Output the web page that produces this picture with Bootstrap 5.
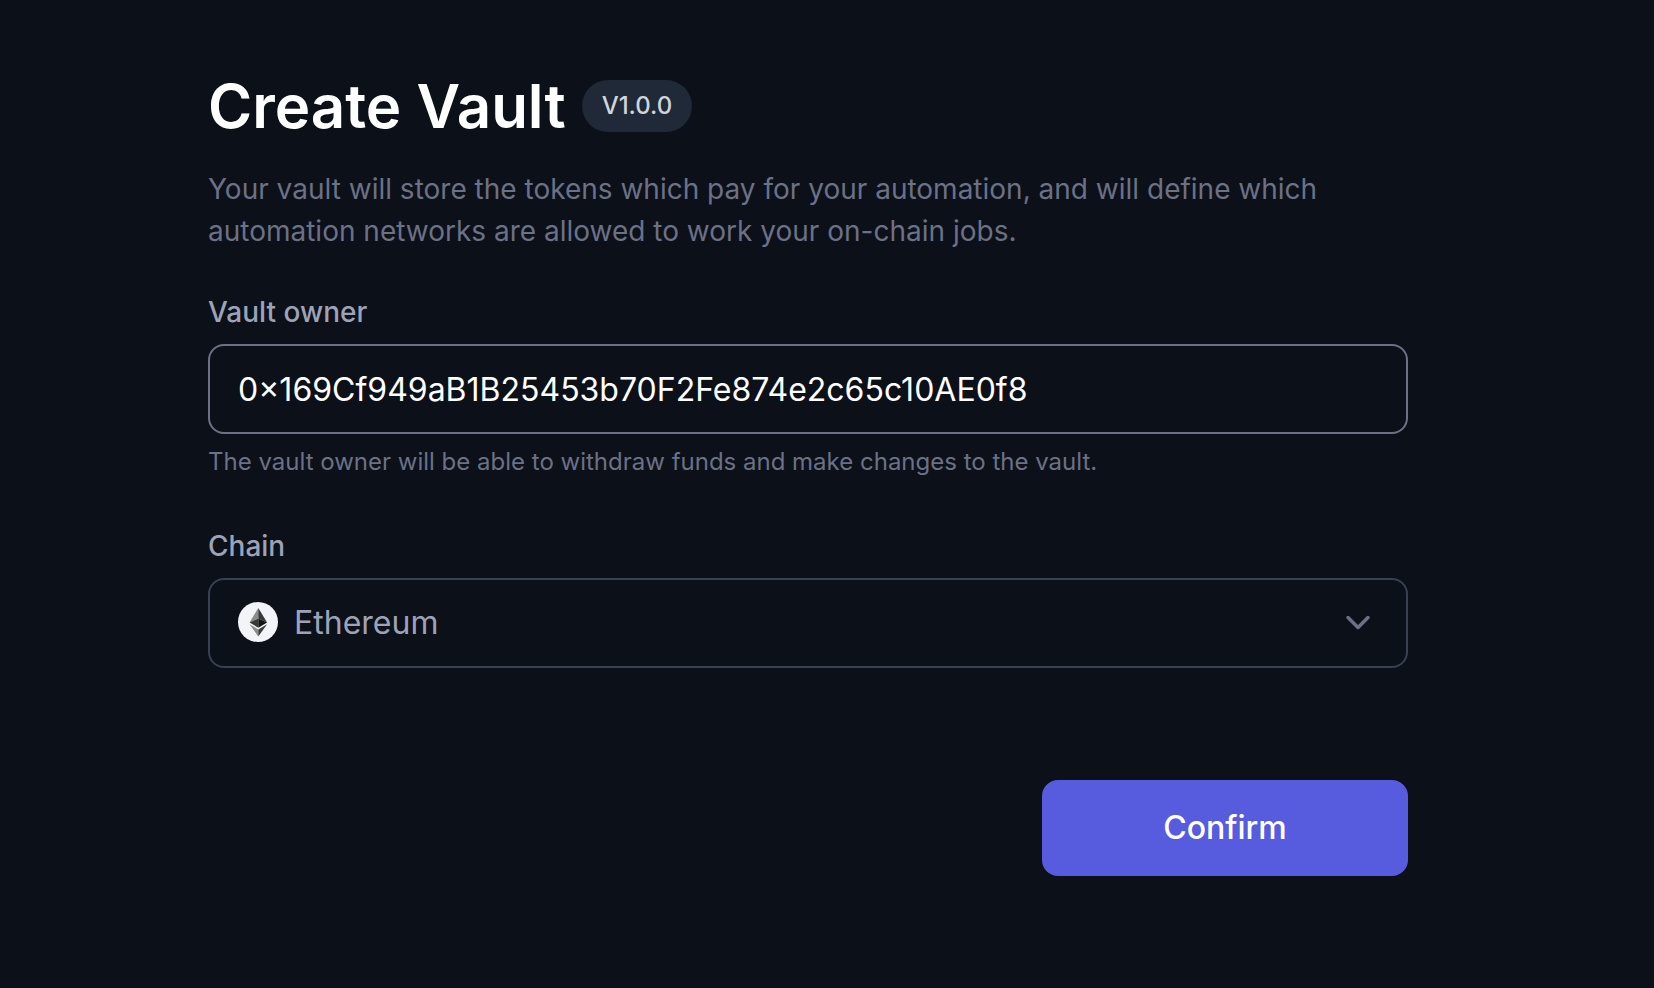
<!DOCTYPE html>
<html lang="en">
<head>
<meta charset="utf-8">
<meta name="viewport" content="width=device-width, initial-scale=1">
<title>Create Vault</title>
<link href="https://cdn.jsdelivr.net/npm/bootstrap@5.3.0/dist/css/bootstrap.min.css" rel="stylesheet">
<style>
  body { background: #0c1019; color: #fff; font-family: Inter, "Liberation Sans", sans-serif; }
  .vault-page { padding: 70px 38px 40px 0; }
  .vault-form { max-width: 1200px; }
  .vault-title { font-size: 60px; line-height: 72px; font-weight: 600; }
  .version-pill { background: #1f2937; color: #d1d5db; font-size: 24px; line-height: 36px; font-weight: 500; padding: 8px 20px; }
  .intro { color: #6b7186; font-size: 28px; line-height: 42px; margin: 26px 0 40px; }
  .field-label { color: #9ca3b8; font-size: 28px; line-height: 40px; font-weight: 500; margin-bottom: 12px; }
  .vault-form .form-control, .vault-form .form-select {
    height: 90px; background: transparent; border: 2px solid #6b7186; border-radius: 16px;
    padding: 0 28px; font-size: 32px; line-height: 48px; color: #fff; box-shadow: none;
  }
  .vault-form .form-select { border-color: #374151; color: #9ca3b8; padding-left: 84px; padding-right: 80px; }
  .vault-form .form-select option { background: #0c1019; }
  .hint { color: #6b7186; font-size: 24px; line-height: 40px; margin: 8px 0 44px; }
  .chain-icon, .chain-arrow { position: absolute; top: 24px; pointer-events: none; }
  .chain-icon { left: 30px; }
  .chain-arrow { right: 30px; }
  .btn-confirm {
    --bs-btn-bg: #575bde; --bs-btn-color: #fff; --bs-btn-hover-bg: #4a4ed0; --bs-btn-hover-color: #fff;
    --bs-btn-border-width: 0; --bs-btn-border-radius: 16px; --bs-btn-font-size: 32px; --bs-btn-line-height: 48px;
    --bs-btn-font-weight: 500; --bs-btn-padding-y: 24px; min-width: 366px;
  }
  .actions { margin-top: 112px; }
</style>
</head>
<body>
<main class="vault-page">
  <form class="vault-form mx-auto">
    <div class="d-flex align-items-center gap-3">
      <h1 class="vault-title mb-0">Create Vault</h1>
      <span class="version-pill rounded-pill">V1.0.0</span>
    </div>
    <p class="intro">Your vault will store the tokens which pay for your automation, and will define which automation networks are allowed to work your on-chain jobs.</p>

    <label class="field-label d-block" for="owner">Vault owner</label>
    <input class="form-control" id="owner" type="text" value="0×169Cf949aB1B25453b70F2Fe874e2c65c10AE0f8" aria-describedby="owner-hint" spellcheck="false">
    <p class="hint" id="owner-hint">The vault owner will be able to withdraw funds and make changes to the vault.</p>

    <label class="field-label d-block" for="chain">Chain</label>
    <div class="position-relative">
      <select class="form-select bg-transparent" id="chain">
        <option selected>Ethereum</option>
      </select>
      <svg class="chain-icon" width="40" height="40" viewBox="0 0 40 40" aria-hidden="true">
        <circle cx="20" cy="20" r="20" fill="#f3f4f8"/>
        <path d="M20.300 6 11.500 20.500 20.300 16.600Z" fill="#8c8c8c"/>
        <path d="M20.300 6 29.100 20.500 20.300 16.600Z" fill="#383838"/>
        <path d="M11.500 20.500 20.300 16.600V25.700Z" fill="#393939"/>
        <path d="M29.100 20.500 20.300 16.600V25.700Z" fill="#141414"/>
        <path d="M11.500 22.200 20.300 27.400V34.500Z" fill="#8c8c8c"/>
        <path d="M29.100 22.200 20.300 27.400V34.500Z" fill="#3c3c3b"/>
      </svg>
      <svg class="chain-arrow" width="40" height="40" viewBox="0 0 40 40" fill="none" stroke="#6b7186" stroke-width="3.500" stroke-linecap="round" stroke-linejoin="round" aria-hidden="true">
        <path d="M10 15.500 20 25.500 30 15.500"/>
      </svg>
    </div>

    <div class="actions d-flex justify-content-end">
      <button class="btn btn-confirm" type="submit">Confirm</button>
    </div>
  </form>
</main>
<script src="https://cdn.jsdelivr.net/npm/bootstrap@5.3.0/dist/js/bootstrap.bundle.min.js"></script>
</body>
</html>
